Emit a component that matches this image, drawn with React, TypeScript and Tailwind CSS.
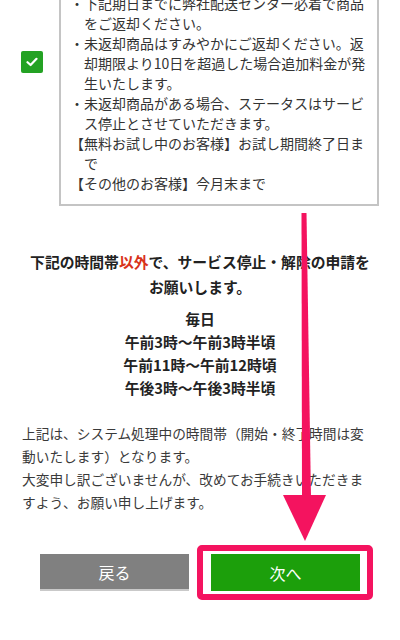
import React from "react";

const font = { fontFamily: '"Noto Sans CJK JP", "Noto Sans", sans-serif' };

export default function App() {
  return (
    <div
      className="relative w-[400px] h-[640px] overflow-hidden bg-white text-[#333]"
      style={font}
    >
      {/* checkbox + notice box */}
      <div className="flex items-start mt-[-18px]">
        <div className="ml-[21px] mt-[69px] w-[22px] h-[22px] rounded-[2px] bg-[#23a223] flex items-center justify-center shrink-0">
          <svg width="12" height="10" viewBox="0 0 12 10">
            <polyline
              points="1.5,5.2 4.6,8 10.5,1.8"
              fill="none"
              stroke="#fff"
              strokeWidth="2.2"
              strokeLinecap="round"
              strokeLinejoin="round"
            />
          </svg>
        </div>
        <div className="ml-[16px] w-[320px] border-2 border-[#c4c4c4] pt-[9px] pb-[11px] pl-[9px] pr-[9px] text-[14px] leading-[20px] text-[#333]">
          <p className="pl-[14px] -indent-[14px]">・下記期日までに弊社配送センター必着で商品をご返却ください。</p>
          <p className="pl-[14px] -indent-[14px]">・未返却商品はすみやかにご返却ください。返却期限より10日を超過した場合追加料金が発生いたします。</p>
          <p className="pl-[14px] -indent-[14px]">・未返却商品がある場合、ステータスはサービス停止とさせていただきます。</p>
          <p className="pl-[14px] -indent-[14px]">【無料お試し中のお客様】お試し期間終了日まで</p>
          <p>【その他のお客様】今月末まで</p>
        </div>
      </div>

      {/* heading */}
      <div className="mt-[43px] px-[26px] text-center font-bold text-[14.8px] leading-[25px] text-[#222]">
        下記の時間帯<span className="text-[#d8321a]">以外</span>で、サービス停止・解除の申請をお願いします。
      </div>

      <div className="mt-[8px] text-center font-bold text-[14.8px] leading-[23px] text-[#222]">
        <p>毎日</p>
        <p>午前3時〜午前3時半頃</p>
        <p>午前11時〜午前12時頃</p>
        <p>午後3時〜午後3時半頃</p>
      </div>

      <div className="mt-[23px] pl-[22px] pr-[28px] text-[13.7px] leading-[23px] text-[#3a3a3a]">
        <p>上記は、システム処理中の時間帯（開始・終了時間は変動いたします）となります。</p>
        <p>大変申し訳ございませんが、改めてお手続きいただきますよう、お願い申し上げます。</p>
      </div>

      {/* buttons */}
      <div className="mt-[40px] flex justify-center gap-[22px]">
        <button className="w-[149px] h-[37px] bg-[#808080] border-b-2 border-[#c9c9c9] text-white text-[16px]">
          戻る
        </button>
        <div className="relative">
          <button className="w-[149px] h-[37px] bg-[#1c9f0b] text-white text-[16px]">
            次へ
          </button>
          <div className="absolute -left-[14px] -right-[13px] -top-[9px] -bottom-[9px] border-[6px] border-[#f4135f] rounded-[5px]" />
        </div>
      </div>

      {/* annotation arrow */}
      <svg
        className="absolute left-0 top-0 pointer-events-none"
        width="400"
        height="640"
        viewBox="0 0 400 640"
      >
        <polygon points="301.5,213 306.5,213 311,498 302,498" fill="#f4135f" />
        <polygon points="283,495 326,495 305,541" fill="#f4135f" />
      </svg>
    </div>
  );
}
